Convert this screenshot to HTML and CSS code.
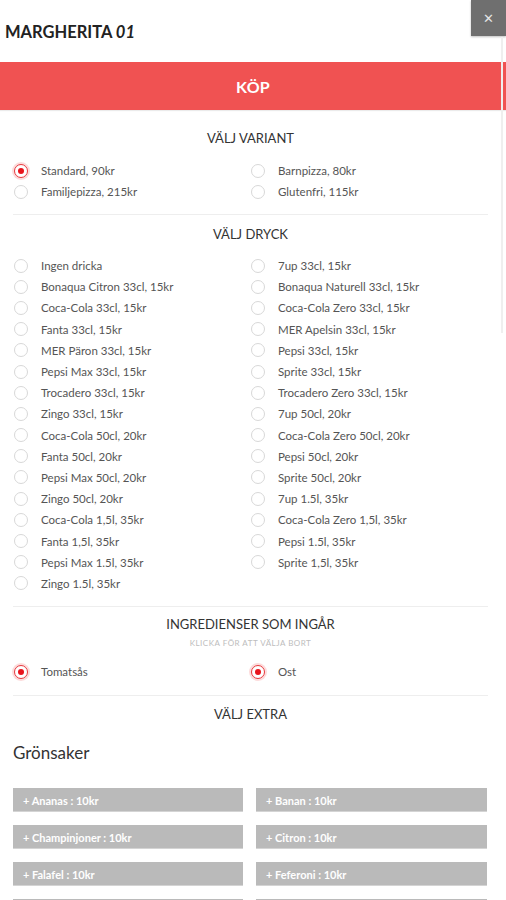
FILE: index.html
```html
<!DOCTYPE html>
<html lang="sv">
<head>
<meta charset="utf-8">
<title>Margherita 01</title>
<link rel="stylesheet" href="styles.css">
</head>
<body>
<div class="modal">
  <div class="top">
    <h1 class="title">MARGHERITA <i>01</i></h1>
  </div>
  <button class="close" aria-label="Stäng">&#x2715;</button>
  <div class="scrolltrack"></div>
  <button class="buy">KÖP</button>

  <div class="content">
    <section class="sec sec-first">
      <h2 class="sec-title">VÄLJ VARIANT</h2>
      <div class="opts">
        <label class="opt"><span class="radio on"></span>Standard, 90kr</label>
        <label class="opt"><span class="radio"></span>Barnpizza, 80kr</label>
        <label class="opt"><span class="radio"></span>Familjepizza, 215kr</label>
        <label class="opt"><span class="radio"></span>Glutenfri, 115kr</label>
      </div>
    </section>

    <section class="sec sec-drinks">
      <h2 class="sec-title">VÄLJ DRYCK</h2>
      <div class="opts drinks">
        <label class="opt"><span class="radio"></span>Ingen dricka</label>
        <label class="opt"><span class="radio"></span>7up 33cl, 15kr</label>
        <label class="opt"><span class="radio"></span>Bonaqua Citron 33cl, 15kr</label>
        <label class="opt"><span class="radio"></span>Bonaqua Naturell 33cl, 15kr</label>
        <label class="opt"><span class="radio"></span>Coca-Cola 33cl, 15kr</label>
        <label class="opt"><span class="radio"></span>Coca-Cola Zero 33cl, 15kr</label>
        <label class="opt"><span class="radio"></span>Fanta 33cl, 15kr</label>
        <label class="opt"><span class="radio"></span>MER Apelsin 33cl, 15kr</label>
        <label class="opt"><span class="radio"></span>MER Päron 33cl, 15kr</label>
        <label class="opt"><span class="radio"></span>Pepsi 33cl, 15kr</label>
        <label class="opt"><span class="radio"></span>Pepsi Max 33cl, 15kr</label>
        <label class="opt"><span class="radio"></span>Sprite 33cl, 15kr</label>
        <label class="opt"><span class="radio"></span>Trocadero 33cl, 15kr</label>
        <label class="opt"><span class="radio"></span>Trocadero Zero 33cl, 15kr</label>
        <label class="opt"><span class="radio"></span>Zingo 33cl, 15kr</label>
        <label class="opt"><span class="radio"></span>7up 50cl, 20kr</label>
        <label class="opt"><span class="radio"></span>Coca-Cola 50cl, 20kr</label>
        <label class="opt"><span class="radio"></span>Coca-Cola Zero 50cl, 20kr</label>
        <label class="opt"><span class="radio"></span>Fanta 50cl, 20kr</label>
        <label class="opt"><span class="radio"></span>Pepsi 50cl, 20kr</label>
        <label class="opt"><span class="radio"></span>Pepsi Max 50cl, 20kr</label>
        <label class="opt"><span class="radio"></span>Sprite 50cl, 20kr</label>
        <label class="opt"><span class="radio"></span>Zingo 50cl, 20kr</label>
        <label class="opt"><span class="radio"></span>7up 1.5l, 35kr</label>
        <label class="opt"><span class="radio"></span>Coca-Cola 1,5l, 35kr</label>
        <label class="opt"><span class="radio"></span>Coca-Cola Zero 1,5l, 35kr</label>
        <label class="opt"><span class="radio"></span>Fanta 1,5l, 35kr</label>
        <label class="opt"><span class="radio"></span>Pepsi 1.5l, 35kr</label>
        <label class="opt"><span class="radio"></span>Pepsi Max 1.5l, 35kr</label>
        <label class="opt"><span class="radio"></span>Sprite 1,5l, 35kr</label>
        <label class="opt"><span class="radio"></span>Zingo 1.5l, 35kr</label>
      </div>
    </section>

    <section class="sec sec-ingr">
      <h2 class="sec-title">INGREDIENSER SOM INGÅR</h2>
      <p class="sec-sub">KLICKA FÖR ATT VÄLJA BORT</p>
      <div class="opts ingr">
        <label class="opt"><span class="radio on"></span>Tomatsås</label>
        <label class="opt"><span class="radio on"></span>Ost</label>
      </div>
    </section>

    <section class="sec sec-extra">
      <h2 class="sec-title">VÄLJ EXTRA</h2>
      <h3 class="group">Grönsaker</h3>
      <div class="extras">
        <button class="extra">+ Ananas : 10kr</button>
        <button class="extra">+ Banan : 10kr</button>
        <button class="extra">+ Champinjoner : 10kr</button>
        <button class="extra">+ Citron : 10kr</button>
        <button class="extra">+ Falafel : 10kr</button>
        <button class="extra">+ Feferoni : 10kr</button>
        <div class="extra"></div>
        <div class="extra"></div>
      </div>
    </section>
  </div>
</div>
</body>
</html>
```

FILE: styles.css
```css
* { box-sizing: border-box; }
html, body { margin: 0; padding: 0; background: #fff; }
body {
  font-family: Lato, "Open Sans", "Liberation Sans", sans-serif;
  color: #333;
  width: 506px;
  overflow: hidden;
}
.modal { position: relative; width: 506px; }
.top {
  height: 62px;
  display: flex;
  align-items: center;
  padding: 2px 0 0 5px;
}
.title {
  margin: 0;
  font-size: 16.5px;
  font-weight: 700;
  color: #222;
}
.title i { font-style: italic; }
.close {
  position: absolute;
  top: 0;
  right: 0;
  width: 35px;
  height: 36px;
  border: 0;
  background: #6f6f6f;
  color: #e4e4e4;
  font-size: 13px;
  font-family: "DejaVu Sans", sans-serif;
  padding: 0;
  display: flex;
  align-items: center;
  justify-content: center;
  box-shadow: 0 1px 2px rgba(0,0,0,0.25);
}
.scrolltrack {
  position: absolute;
  top: 37px;
  right: 3px;
  width: 2px;
  height: 296px;
  background: #efefef;
}
.buy {
  display: block;
  width: 100%;
  height: 48px;
  border: 0;
  margin: 0;
  background: #f05252;
  color: #fff;
  font-family: inherit;
  font-size: 16px;
  font-weight: 700;
  letter-spacing: 0.2px;
  box-shadow: 0 1px 1px rgba(0,0,0,0.08);
}
.content { padding: 0 18px 0 13px; }
.sec { border-top: 1px solid #eeeeee; padding: 9px 0 12px; }
.sec-first { border-top: 0; padding-top: 18px; }
.sec-title {
  margin: 0;
  text-align: center;
  font-size: 13px;
  font-weight: 400;
  line-height: 20px;
  color: #333;
}
.opts {
  margin-top: 12px;
  display: grid;
  grid-template-columns: 1fr 1fr;
  padding-left: 1px;
}
.drinks { margin-top: 11px; grid-auto-rows: 21.2px; }
.opt {
  display: flex;
  align-items: center;
  height: 21px;
  font-size: 11.5px;
  color: #555;
  white-space: nowrap;
}
.drinks .opt { height: 21.2px; }
.radio {
  width: 14px;
  height: 14px;
  border: 1px solid #d8d8d8;
  border-radius: 50%;
  margin-right: 13px;
  flex: none;
  display: flex;
  align-items: center;
  justify-content: center;
  background: #fff;
}
.radio.on {
  border-color: #e8383d;
  box-shadow: 0 0 0 2px rgba(240, 90, 90, 0.22);
}
.radio.on::after {
  content: "";
  width: 6px;
  height: 6px;
  border-radius: 50%;
  background: #e8141c;
}
.sec-ingr { padding-top: 7px; padding-bottom: 13px; }
.sec-sub {
  margin: 4px 0 0;
  text-align: center;
  font-size: 8px;
  line-height: 10px;
  color: #bdbdbd;
  letter-spacing: 0.5px;
}
.ingr { margin-top: 13px; }
.sec-extra { padding-top: 8px; }
.group {
  margin: 17px 0 0;
  font-size: 17px;
  font-weight: 400;
  line-height: 24px;
  color: #333;
}
.extras {
  margin-top: 23px;
  display: grid;
  grid-template-columns: 230px 231px;
  column-gap: 13px;
  row-gap: 13px;
}
.extra {
  height: 24px;
  border: 0;
  background: #bababa;
  color: #fff;
  font-family: inherit;
  font-size: 11px;
  font-weight: 700;
  text-align: left;
  padding: 0 0 0 10px;
  box-shadow: 0 -1px 0 #d4d4d4 inset;
}
```
